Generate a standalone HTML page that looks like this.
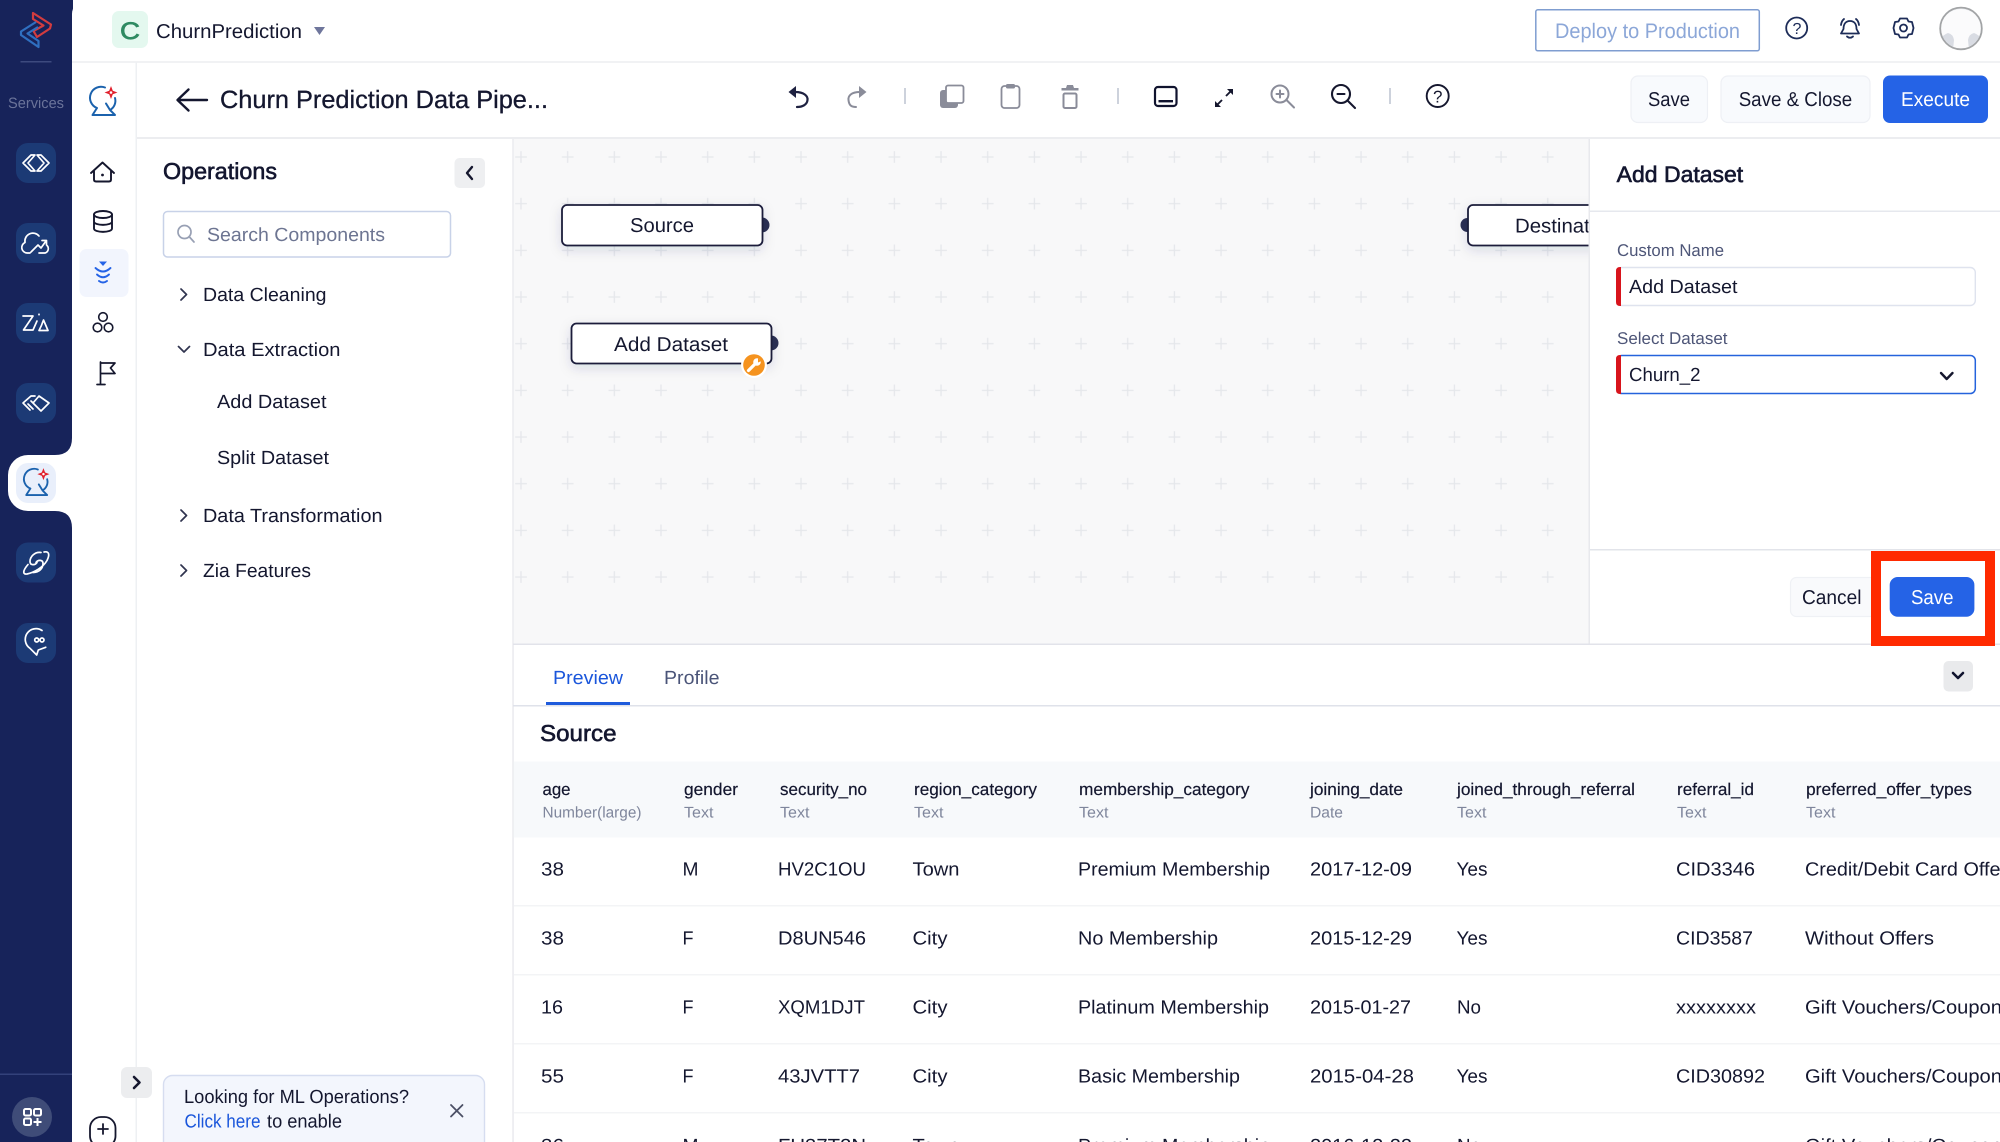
<!DOCTYPE html>
<html><head><meta charset="utf-8"><title>Churn Prediction Data Pipeline</title>
<style>
html,body{margin:0;padding:0;width:2000px;height:1142px;overflow:hidden;background:#fff}
svg{display:block}
text{font-family:"Liberation Sans",sans-serif;font-size:19px;fill:#14172f;text-rendering:geometricPrecision}
.m{stroke:#14172f;stroke-width:.3}
.b{stroke:#10132e;stroke-width:.6}
.h{font-size:17px;stroke:#14172f;stroke-width:.2}
.t{font-size:15.5px;fill:#7f869c}
.g{fill:#6d7592}
.l{font-size:17px;fill:#4e5678}
.w{stroke:#fff;stroke-width:1.7;fill:none;stroke-linecap:round;stroke-linejoin:round}
.k{stroke:#15172e;stroke-width:1.9;fill:none;stroke-linecap:round;stroke-linejoin:round}
.y{stroke:#8a8c99;stroke-width:2;fill:none;stroke-linecap:round;stroke-linejoin:round}
.n{stroke:#1d2c58;stroke-width:1.8;fill:none;stroke-linecap:round;stroke-linejoin:round}
</style></head><body>
<svg xmlns="http://www.w3.org/2000/svg" width="2000" height="1142" viewBox="0 0 2000 1142">
<defs>
<pattern id="plus" patternUnits="userSpaceOnUse" x="497.67" y="133.67" width="46.67" height="46.67">
<path d="M23.33 17.5V29.2M17.5 23.33H29.2" stroke="#e5e7eb" stroke-width="1.3" fill="none"/>
</pattern>
<filter id="sh" x="-15%" y="-40%" width="130%" height="200%"><feDropShadow dx="0" dy="4" stdDeviation="6" flood-color="#1b2150" flood-opacity=".13"/></filter>
<clipPath id="av"><circle cx="1961" cy="28.5" r="20"/></clipPath>
<g id="ball" fill="none" stroke="#1b62ad" stroke-width="2" stroke-linecap="round" stroke-linejoin="round">
<path d="M2,-14A10.5 10.5 0 0 0 -6,6.5M12,-3.5A10.5 10.5 0 0 1 7,8.5M3,2L7,8.5M-6,6.5L-10.5,13.5H12L7,8.5"/>
<path d="M8,-15.5L9.8,-10.8L14.5,-9L9.8,-7.2L8,-2.5L6.2,-7.2L1.5,-9L6.2,-10.8Z" fill="#e1202c" stroke="none"/>
<circle cx="8" cy="-9" r="1.3" fill="#fff" stroke="none"/>
</g>
</defs>

<!-- main white -->
<rect width="2000" height="1142" fill="#fff"/>

<!-- left dark sidebar -->
<rect x="0" y="0" width="73" height="1142" fill="#17235a"/>
<path d="M72,14A14 14 0 0 1 86,0H100V1142H72Z" fill="#fff"/>
<path d="M72,438Q72,455 55,455H28A20 20 0 0 0 8,475V491A20 20 0 0 0 28,511H55Q72,511 72,528Z" fill="#fff"/>
<!-- logo -->
<path d="M33,13L51,24.5L50,28.5L37,37L33.5,31L43.5,25.5L33,19Z" fill="none" stroke="#d23c3f" stroke-width="2.2" stroke-linejoin="round"/>
<path d="M36,22L21,31.5V35L38.5,47V41L27.5,33.5L38,27" fill="none" stroke="#2f6fc0" stroke-width="2.2" stroke-linejoin="round"/>
<rect x="20.500" y="61" width="31" height="1.500" fill="#3d4a7e"/>
<text x="8" y="108" textLength="56" lengthAdjust="spacingAndGlyphs" style="font-size:15px;fill:#6a7399">Services</text>

<g fill="#1c3a75">
<rect x="16" y="143" width="40" height="40" rx="12"/>
<rect x="16" y="223" width="40" height="40" rx="12"/>
<rect x="16" y="303" width="40" height="40" rx="12"/>
<rect x="16" y="383" width="40" height="40" rx="12"/>
<rect x="16" y="542.500" width="40" height="40" rx="12"/>
<rect x="16" y="623" width="40" height="40" rx="12"/>
</g>
<rect x="16" y="463" width="40" height="40" rx="12" fill="#e9effb"/>
<g class="w" transform="translate(36,163)"><path d="M-5,-8L-13,0L-5,8H-1L-8,0L-1,-8ZM5,-8L13,0L5,8H1L8,0L1,-8Z"/></g>
<g class="w" transform="translate(36,243)"><path d="M-6,10H-9A5.500 5.500 0 0 1 -11,-0.500A8 8 0 0 1 3,-7M-5,9L2,2L5,5L10,-2M6,-2.500H10.500V2M3,10H9A4.500 4.500 0 0 0 11,2.500"/></g>
<g class="w" transform="translate(36,323)"><path d="M-13,-7H-3L-12.500,7H-3M1,-2L-3,7M3,7.500H12L7.500,-3Q5.500,3 3,7.500ZM3,-8.800V-8.300"/></g>
<g class="w" transform="translate(36,403)"><path d="M3,-7L13,0L5,8L-3,0ZM-1,-7H-5L-13,0L-6,7M-8,1L-3,6M-5,-2L0,3"/></g>
<use href="#ball" transform="translate(36,482.500) scale(.93)"/>
<g class="w" transform="translate(36,562.500)"><path d="M-8,2C-14,9 -13,12 -9,11.500C-2,10 7,5 11,-2C14,-8 13,-11.500 8,-10.500M5,-10C-1,-11 -6,-6 -6,-1C-6,3 -1,3 1,0M-3,10C3,10 7,6 7,1C7,-3 2,-3 0,0"/></g>
<g class="w" transform="translate(36,643)"><path d="M6,-12.500A10 10 0 0 0 -6,5.300L0.700,12L2.300,7L9.700,4.300"/><circle cx="0.700" cy="-3" r="2"/><circle cx="6" cy="-3" r="2"/></g>

<rect x="0" y="1073.500" width="72" height="1.500" fill="#33417a"/>
<circle cx="32" cy="1117" r="20" fill="#3f4c78"/>
<g stroke="#fff" stroke-width="2" fill="none"><rect x="24" y="1109" width="7" height="6.500" rx="1.500"/><rect x="34" y="1109" width="7" height="6.500" rx="1.500"/><rect x="24" y="1118.500" width="7" height="6.500" rx="1.500"/><path d="M37.500,1118V1126M33.500,1122H41.500"/></g>

<!-- top bar -->
<rect x="72" y="61" width="1928" height="2" fill="#f1f2f4"/>
<rect x="112" y="11" width="36" height="37" rx="7" fill="#e4f8ef"/>
<text x="120" y="39" textLength="20" lengthAdjust="spacingAndGlyphs" style="font-size:24px;fill:#2f8a62;stroke:#2f8a62;stroke-width:.7">C</text>
<text x="156" y="38" textLength="146" lengthAdjust="spacingAndGlyphs" style="font-size:20px">ChurnPrediction</text>
<path d="M314,27H325L319.500,35Z" fill="#6f769c"/>

<rect x="1535.800" y="9.800" width="223.500" height="41" rx="2" fill="#fff" stroke="#7f9dd0" stroke-width="1.500"/>
<text x="1555" y="38" textLength="185" lengthAdjust="spacingAndGlyphs" style="font-size:21px;fill:#8ca7d8">Deploy to Production</text>
<circle class="n" cx="1796.700" cy="28" r="10.500"/>
<text x="1792.500" y="34" style="font-size:16px;fill:#1d2c58">?</text>
<g class="n"><path d="M1850,21C1845,21 1843.500,25 1843.500,29L1841,33.500H1859L1856.500,29C1856.500,25 1855,21 1850,21ZM1847,36.500Q1850,39 1853,36.500M1841,25Q1841.500,21 1844,19M1859,25Q1858.500,21 1856,19"/></g>
<g class="n"><path d="M1900,18.500H1907L1908.500,21.500L1912,22L1913.500,28L1912,34L1908.500,34.500L1907,37.500H1900L1898.500,34.500L1895,34L1893.500,28L1895,22L1898.500,21.500Z"/><circle cx="1903.500" cy="28" r="3.500"/></g>
<circle cx="1961" cy="28.500" r="20.800" fill="#fbfbfc" stroke="#a2a4a6" stroke-width="1.800"/>
<g clip-path="url(#av)"><path d="M1941,50V40Q1942,35 1948,33Q1953,34 1954,40L1953,50ZM1981,50V40Q1980,35 1974,33Q1969,34 1968,40L1969,50Z" fill="#d9dce3"/><path d="M1947,8H1975V14Q1961,4 1947,14Z" fill="#e6e8ec"/></g>

<!-- left rail -->
<rect x="135.500" y="62" width="1.500" height="1080" fill="#eef0f3"/>
<use href="#ball" transform="translate(103,101.500)"/>
<g class="k"><path d="M91,173L102.500,162.500L114,173M94,171V179.500Q94,181.500 96,181.500H109Q111,181.500 111,179.500V171"/></g><circle cx="102.500" cy="175" r="1.400" fill="#15172e"/>
<g class="k"><ellipse cx="103" cy="214.500" rx="9" ry="3.500"/><path d="M94,214.500V228.500C94,233 112,233 112,228.500V214.500M94,221.500C94,226 112,226 112,221.500"/></g>
<rect x="79.500" y="249" width="49" height="48" rx="7" fill="#f2f5fd"/>
<path d="M99,261.500H107L103,266Z" fill="#2563e6"/>
<g fill="none" stroke="#2563e6" stroke-width="1.900" stroke-linecap="round"><path d="M95.500,268Q103,275 110.500,268M97,274.500Q103,280 109,274.500M99,281Q103,284 107,281"/></g>
<g class="k" style="stroke-width:1.600"><circle cx="103" cy="317" r="4.300"/><circle cx="97.500" cy="327.500" r="4.300"/><circle cx="108.500" cy="327.500" r="4.300"/></g>
<g class="k" style="stroke-width:1.700"><path d="M100.500,362V384M97,384.500H105M100.500,363H115L110.500,368L115,373.500H100.500"/></g>

<!-- header bar -->
<rect x="137" y="137" width="1863" height="2" fill="#ecedf0"/>
<path d="M207,100H178M188.500,89.500L177.500,100L188.500,110.500" fill="none" stroke="#14172f" stroke-width="2.400" stroke-linecap="round" stroke-linejoin="round"/>
<text class="m" x="220" y="108" textLength="328" lengthAdjust="spacingAndGlyphs" style="font-size:25px">Churn Prediction Data Pipe...</text>

<!-- toolbar -->
<path d="M788.500,92L796,86V98Z" fill="#1e2140"/>
<path d="M795,92C804,92 808,96 807.500,100C807,105 802,107 797,107" fill="none" stroke="#1e2140" stroke-width="2.200" stroke-linecap="round"/>
<path d="M866.500,92L859,86V98Z" fill="#8a8c99"/>
<path d="M860,92C851,92 848,96 848.500,100C849,105 851,107 856,107" class="y"/>
<rect x="904" y="88" width="2" height="16" fill="#cdd2dc"/>
<rect x="940" y="90" width="18" height="18" rx="3" fill="#8a8c99"/>
<rect x="946" y="85.500" width="17.500" height="17.500" rx="2" fill="#fff" stroke="#8a8c99" stroke-width="1.800"/>
<rect x="1001.500" y="86" width="18" height="22" rx="3" fill="#fff" stroke="#8a8c99" stroke-width="1.800"/>
<rect x="1006" y="84" width="9" height="4.500" rx="1.500" fill="#8a8c99"/>
<path d="M1066,88L1067,85H1073L1074,88H1078.500V90.500H1061.500V88Z" fill="#8a8c99"/>
<rect x="1063.500" y="93.500" width="13" height="14.500" rx="1.500" fill="none" stroke="#8a8c99" stroke-width="2"/>
<rect x="1117" y="88" width="2" height="16" fill="#cdd2dc"/>
<rect x="1155" y="87" width="21.500" height="19" rx="3" fill="none" stroke="#10132e" stroke-width="2.200"/>
<rect x="1158.500" y="100" width="14.500" height="2.400" fill="#10132e"/>
<path d="M1227,89H1233V95ZM1215,101V107H1221Z" fill="#15172e"/>
<path d="M1231,91L1226,96M1217,105L1222,100" stroke="#15172e" stroke-width="1.900" fill="none"/>
<g class="y"><circle cx="1280" cy="94" r="8.500"/><path d="M1286.500,100L1294,107.500M1276.500,94H1283.500M1280,90.500V97.500"/></g>
<g class="k" style="stroke-width:2.100"><circle cx="1341" cy="94" r="9"/><path d="M1347.500,100.500L1355,108M1337.500,94H1344.500"/></g>
<rect x="1389" y="88" width="2" height="16" fill="#cdd2dc"/>
<circle class="k" cx="1437.700" cy="96" r="11"/>
<text x="1433" y="102.500" style="font-size:17px;fill:#15172e">?</text>

<!-- action buttons -->
<rect x="1631" y="76" width="76.500" height="46.500" rx="7" fill="#f8fafd" stroke="#eef0f5" stroke-width="1.200"/>
<text x="1648" y="106" textLength="42" lengthAdjust="spacingAndGlyphs" style="font-size:20px">Save</text>
<rect x="1721" y="76" width="149" height="46.500" rx="7" fill="#f8fafd" stroke="#eef0f5" stroke-width="1.200"/>
<text x="1738.700" y="106" textLength="113.500" lengthAdjust="spacingAndGlyphs" style="font-size:20px">Save &amp; Close</text>
<rect x="1883" y="75.500" width="105" height="47.500" rx="7" fill="#2563e6"/>
<text x="1901" y="106" textLength="69" lengthAdjust="spacingAndGlyphs" style="font-size:20px;fill:#fff">Execute</text>

<!-- operations panel -->
<rect x="512.300" y="139" width="1.500" height="1003" fill="#e9eaee"/>
<text class="b" x="163" y="179" textLength="114" lengthAdjust="spacingAndGlyphs" style="font-size:23px">Operations</text>
<rect x="454.500" y="158" width="30.500" height="30" rx="5" fill="#eeeff1"/>
<path d="M472,167L467,173L472,179" fill="none" stroke="#15172e" stroke-width="2.400" stroke-linecap="round" stroke-linejoin="round"/>
<rect x="163.500" y="211.500" width="287" height="45.500" rx="4" fill="#fff" stroke="#c8d2e8" stroke-width="1.500"/>
<circle cx="184.500" cy="232" r="6.500" fill="none" stroke="#98a0b4" stroke-width="1.700"/><path d="M189.500,237L194,242" stroke="#98a0b4" stroke-width="1.700" stroke-linecap="round"/>
<text class="g" x="207" y="241" textLength="178" lengthAdjust="spacingAndGlyphs">Search Components</text>

<g fill="none" stroke="#30344f" stroke-width="1.700" stroke-linecap="round" stroke-linejoin="round">
<path d="M181,289L186.500,294.500L181,300M178.500,346.500L184,352L189.500,346.500M181,510L186.500,515.500L181,521M181,565L186.500,570.500L181,576"/>
</g>
<text x="203" y="301" textLength="123.500" lengthAdjust="spacingAndGlyphs">Data Cleaning</text>
<text x="203" y="356" textLength="137.500" lengthAdjust="spacingAndGlyphs">Data Extraction</text>
<text x="217" y="408" textLength="109.500" lengthAdjust="spacingAndGlyphs">Add Dataset</text>
<text x="217" y="464" textLength="112" lengthAdjust="spacingAndGlyphs">Split Dataset</text>
<text x="203" y="522" textLength="179.500" lengthAdjust="spacingAndGlyphs">Data Transformation</text>
<text x="203" y="577" textLength="108" lengthAdjust="spacingAndGlyphs">Zia Features</text>

<rect x="121" y="1067" width="31" height="31" rx="6" fill="#ecedef"/>
<path d="M134,1077L139.500,1082.500L134,1088" fill="none" stroke="#15172e" stroke-width="2.600" stroke-linecap="round" stroke-linejoin="round"/>
<rect x="90" y="1117" width="25.500" height="30" rx="11" fill="#fff" stroke="#15172e" stroke-width="1.800"/>
<path d="M103,1124V1134M98,1129H108" stroke="#15172e" stroke-width="1.800" stroke-linecap="round"/>
<rect x="163.500" y="1075.500" width="321" height="80" rx="9" fill="#f3f6fd" stroke="#d6ddf0" stroke-width="1.400"/>
<text x="184" y="1103" textLength="225" lengthAdjust="spacingAndGlyphs">Looking for ML Operations?</text>
<text x="184.500" y="1127.500" textLength="76" lengthAdjust="spacingAndGlyphs" style="fill:#1a56db">Click here</text>
<text x="267" y="1127.500" textLength="75" lengthAdjust="spacingAndGlyphs">to enable</text>
<path d="M451,1105L462.500,1116.500M462.500,1105L451,1116.500" stroke="#4c5066" stroke-width="1.800" stroke-linecap="round"/>

<!-- canvas -->
<rect x="513.800" y="139" width="1075.200" height="505" fill="#f8f8f9"/>
<rect x="513.800" y="139" width="1075.200" height="460" fill="url(#plus)"/>
<!-- nodes -->
<circle cx="762" cy="225" r="7.500" fill="#2b3052"/>
<rect x="562" y="205" width="200.500" height="40.500" rx="5" fill="#fff" stroke="#1b1f3b" stroke-width="1.800" filter="url(#sh)"/>
<text x="630" y="232" textLength="64" lengthAdjust="spacingAndGlyphs" style="font-size:20px">Source</text>
<circle cx="771" cy="343" r="7.500" fill="#2b3052"/>
<rect x="571.500" y="323.500" width="200" height="40" rx="5" fill="#fff" stroke="#1b1f3b" stroke-width="1.800" filter="url(#sh)"/>
<text x="614" y="351" textLength="114" lengthAdjust="spacingAndGlyphs" style="font-size:20px">Add Dataset</text>
<circle cx="754" cy="365" r="13" fill="#fff"/><circle cx="754" cy="365" r="10.800" fill="#f5931f"/>
<path d="M748.500,370.500L755,364" stroke="#fff" stroke-width="3.200" stroke-linecap="round"/><circle cx="757" cy="362" r="3.800" fill="#fff"/><path d="M758,358L761.500,361L758,362.500Z" fill="#f5931f"/>
<circle cx="1467.500" cy="225" r="7" fill="#2b3052"/>
<rect x="1468" y="205" width="160" height="40.500" rx="5" fill="#fff" stroke="#1b1f3b" stroke-width="1.800" filter="url(#sh)"/>
<text x="1515" y="232.500" textLength="102" lengthAdjust="spacingAndGlyphs" style="font-size:20px">Destination</text>

<!-- right panel -->
<rect x="1589" y="139" width="411" height="505" fill="#fff"/>
<rect x="1588.500" y="139" width="1.500" height="505" fill="#e8e9ed"/>
<text class="b" x="1616.700" y="182" textLength="126.500" lengthAdjust="spacingAndGlyphs" style="font-size:22.500px">Add Dataset</text>
<rect x="1590" y="210.500" width="410" height="1.500" fill="#e6e8ee"/>
<text class="l" x="1617" y="256" textLength="107" lengthAdjust="spacingAndGlyphs">Custom Name</text>
<rect x="1616.800" y="267.500" width="358.500" height="38" rx="5" fill="#fff" stroke="#dfe3ee" stroke-width="1.400"/>
<path d="M1621,267H1620Q1616,267 1616,271V302Q1616,306 1620,306H1621Z" fill="#d8141c"/>
<text x="1629" y="293" textLength="108.500" lengthAdjust="spacingAndGlyphs">Add Dataset</text>
<text class="l" x="1617" y="344" textLength="110.500" lengthAdjust="spacingAndGlyphs">Select Dataset</text>
<rect x="1616.800" y="355.500" width="358.500" height="38" rx="5" fill="#fff" stroke="#2563dc" stroke-width="1.500"/>
<path d="M1621,355H1620Q1616,355 1616,359V390Q1616,394 1620,394H1621Z" fill="#d8141c"/>
<text x="1629" y="381" textLength="71.500" lengthAdjust="spacingAndGlyphs">Churn_2</text>
<path d="M1941,373L1946.700,379L1952.500,373" fill="none" stroke="#15172e" stroke-width="2.400" stroke-linecap="round" stroke-linejoin="round"/>
<rect x="1590" y="549" width="410" height="1.500" fill="#e2e4ea"/>

<rect x="1790.500" y="577.500" width="100" height="39" rx="6" fill="#f9fafc" stroke="#eff1f5" stroke-width="1.200"/>
<text x="1802" y="604" textLength="59.500" lengthAdjust="spacingAndGlyphs" style="font-size:20px">Cancel</text>
<rect x="1876" y="556" width="114" height="85" fill="#fff" stroke="#ff2a00" stroke-width="10"/>
<rect x="1889.700" y="577" width="84.700" height="39.700" rx="8" fill="#2563e6"/>
<text x="1911" y="604" textLength="42.500" lengthAdjust="spacingAndGlyphs" style="font-size:20px;fill:#fff">Save</text>

<!-- bottom -->
<rect x="513" y="643.500" width="1358" height="1.500" fill="#e2e3ea"/>
<rect x="1995" y="643.500" width="5" height="1.500" fill="#e2e3ea"/>
<text x="553" y="684" textLength="70" lengthAdjust="spacingAndGlyphs" style="fill:#1a56db">Preview</text>
<text x="664" y="684" textLength="55.500" lengthAdjust="spacingAndGlyphs" style="fill:#4a5478">Profile</text>
<rect x="513" y="705" width="1487" height="1.500" fill="#dfe2ea"/>
<rect x="546" y="702" width="84" height="3" fill="#1f5bdc"/>
<rect x="1943.500" y="661" width="29.500" height="30.500" rx="5" fill="#e9eaec"/>
<path d="M1953,673L1958,678L1963,673" fill="none" stroke="#10132e" stroke-width="2.600" stroke-linecap="round" stroke-linejoin="round"/>
<text class="b" x="540" y="741" textLength="76.500" lengthAdjust="spacingAndGlyphs" style="font-size:23px">Source</text>
<rect x="513.800" y="761.500" width="1486.200" height="76" fill="#f7f9fb"/>

<g>
<text class="h" x="542.500" y="795" textLength="28" lengthAdjust="spacingAndGlyphs">age</text>
<text class="t" x="542.500" y="817.700" textLength="99" lengthAdjust="spacingAndGlyphs">Number(large)</text>
<text class="h" x="684" y="795" textLength="54" lengthAdjust="spacingAndGlyphs">gender</text>
<text class="t" x="684" y="817.700" textLength="29.500" lengthAdjust="spacingAndGlyphs">Text</text>
<text class="h" x="780" y="795" textLength="87" lengthAdjust="spacingAndGlyphs">security_no</text>
<text class="t" x="780" y="817.700" textLength="29.500" lengthAdjust="spacingAndGlyphs">Text</text>
<text class="h" x="914" y="795" textLength="123" lengthAdjust="spacingAndGlyphs">region_category</text>
<text class="t" x="914" y="817.700" textLength="29.500" lengthAdjust="spacingAndGlyphs">Text</text>
<text class="h" x="1079" y="795" textLength="170.500" lengthAdjust="spacingAndGlyphs">membership_category</text>
<text class="t" x="1079" y="817.700" textLength="29.500" lengthAdjust="spacingAndGlyphs">Text</text>
<text class="h" x="1310" y="795" textLength="93" lengthAdjust="spacingAndGlyphs">joining_date</text>
<text class="t" x="1310" y="817.700" textLength="33" lengthAdjust="spacingAndGlyphs">Date</text>
<text class="h" x="1457" y="795" textLength="178" lengthAdjust="spacingAndGlyphs">joined_through_referral</text>
<text class="t" x="1457" y="817.700" textLength="29.500" lengthAdjust="spacingAndGlyphs">Text</text>
<text class="h" x="1677" y="795" textLength="77" lengthAdjust="spacingAndGlyphs">referral_id</text>
<text class="t" x="1677" y="817.700" textLength="29.500" lengthAdjust="spacingAndGlyphs">Text</text>
<text class="h" x="1806" y="795" textLength="166" lengthAdjust="spacingAndGlyphs">preferred_offer_types</text>
<text class="t" x="1806" y="817.700" textLength="29.500" lengthAdjust="spacingAndGlyphs">Text</text>
</g>

<g fill="#f3f4f6">
<rect x="513.800" y="905" width="1486.200" height="1.500"/>
<rect x="513.800" y="974" width="1486.200" height="1.500"/>
<rect x="513.800" y="1043" width="1486.200" height="1.500"/>
<rect x="513.800" y="1112" width="1486.200" height="1.500"/>
</g>

<g>
<text x="541" y="875.700" textLength="23" lengthAdjust="spacingAndGlyphs">38</text>
<text x="682.500" y="875.700" textLength="16" lengthAdjust="spacingAndGlyphs">M</text>
<text x="778" y="875.700" textLength="88" lengthAdjust="spacingAndGlyphs">HV2C1OU</text>
<text x="912.500" y="875.700" textLength="47" lengthAdjust="spacingAndGlyphs">Town</text>
<text x="1078" y="875.700" textLength="192" lengthAdjust="spacingAndGlyphs">Premium Membership</text>
<text x="1310" y="875.700" textLength="102" lengthAdjust="spacingAndGlyphs">2017-12-09</text>
<text x="1456.500" y="875.700" textLength="31" lengthAdjust="spacingAndGlyphs">Yes</text>
<text x="1676" y="875.700" textLength="79" lengthAdjust="spacingAndGlyphs">CID3346</text>
<text x="1805" y="875.700" textLength="212" lengthAdjust="spacingAndGlyphs">Credit/Debit Card Offers</text>

<text x="541" y="944.600" textLength="23" lengthAdjust="spacingAndGlyphs">38</text>
<text x="682.500" y="944.600" textLength="11" lengthAdjust="spacingAndGlyphs">F</text>
<text x="778" y="944.600" textLength="88" lengthAdjust="spacingAndGlyphs">D8UN546</text>
<text x="912.500" y="944.600" textLength="35" lengthAdjust="spacingAndGlyphs">City</text>
<text x="1078" y="944.600" textLength="140" lengthAdjust="spacingAndGlyphs">No Membership</text>
<text x="1310" y="944.600" textLength="102" lengthAdjust="spacingAndGlyphs">2015-12-29</text>
<text x="1456.500" y="944.600" textLength="31" lengthAdjust="spacingAndGlyphs">Yes</text>
<text x="1676" y="944.600" textLength="77" lengthAdjust="spacingAndGlyphs">CID3587</text>
<text x="1805" y="944.600" textLength="129" lengthAdjust="spacingAndGlyphs">Without Offers</text>

<text x="541" y="1013.500" textLength="22" lengthAdjust="spacingAndGlyphs">16</text>
<text x="682.500" y="1013.500" textLength="11" lengthAdjust="spacingAndGlyphs">F</text>
<text x="778" y="1013.500" textLength="87" lengthAdjust="spacingAndGlyphs">XQM1DJT</text>
<text x="912.500" y="1013.500" textLength="35" lengthAdjust="spacingAndGlyphs">City</text>
<text x="1078" y="1013.500" textLength="191" lengthAdjust="spacingAndGlyphs">Platinum Membership</text>
<text x="1310" y="1013.500" textLength="101" lengthAdjust="spacingAndGlyphs">2015-01-27</text>
<text x="1457" y="1013.500" textLength="24" lengthAdjust="spacingAndGlyphs">No</text>
<text x="1676" y="1013.500" textLength="80" lengthAdjust="spacingAndGlyphs">xxxxxxxx</text>
<text x="1805" y="1013.500" textLength="207" lengthAdjust="spacingAndGlyphs">Gift Vouchers/Coupons</text>

<text x="541" y="1082.400" textLength="23" lengthAdjust="spacingAndGlyphs">55</text>
<text x="682.500" y="1082.400" textLength="11" lengthAdjust="spacingAndGlyphs">F</text>
<text x="778" y="1082.400" textLength="82" lengthAdjust="spacingAndGlyphs">43JVTT7</text>
<text x="912.500" y="1082.400" textLength="35" lengthAdjust="spacingAndGlyphs">City</text>
<text x="1078" y="1082.400" textLength="162" lengthAdjust="spacingAndGlyphs">Basic Membership</text>
<text x="1310" y="1082.400" textLength="104" lengthAdjust="spacingAndGlyphs">2015-04-28</text>
<text x="1456.500" y="1082.400" textLength="31" lengthAdjust="spacingAndGlyphs">Yes</text>
<text x="1676" y="1082.400" textLength="89" lengthAdjust="spacingAndGlyphs">CID30892</text>
<text x="1805" y="1082.400" textLength="207" lengthAdjust="spacingAndGlyphs">Gift Vouchers/Coupons</text>

<text x="541" y="1151.800" textLength="23" lengthAdjust="spacingAndGlyphs">36</text>
<text x="682.500" y="1151.800" textLength="16" lengthAdjust="spacingAndGlyphs">M</text>
<text x="778" y="1151.800" textLength="88" lengthAdjust="spacingAndGlyphs">FU37T2N</text>
<text x="912.500" y="1151.800" textLength="47" lengthAdjust="spacingAndGlyphs">Town</text>
<text x="1078" y="1151.800" textLength="192" lengthAdjust="spacingAndGlyphs">Premium Membership</text>
<text x="1310" y="1151.800" textLength="102" lengthAdjust="spacingAndGlyphs">2016-12-22</text>
<text x="1457" y="1151.800" textLength="24" lengthAdjust="spacingAndGlyphs">No</text>
<text x="1676" y="1151.800" textLength="80" lengthAdjust="spacingAndGlyphs">xxxxxxxx</text>
<text x="1805" y="1151.800" textLength="207" lengthAdjust="spacingAndGlyphs">Gift Vouchers/Coupons</text>
</g>
</svg>
</body></html>
